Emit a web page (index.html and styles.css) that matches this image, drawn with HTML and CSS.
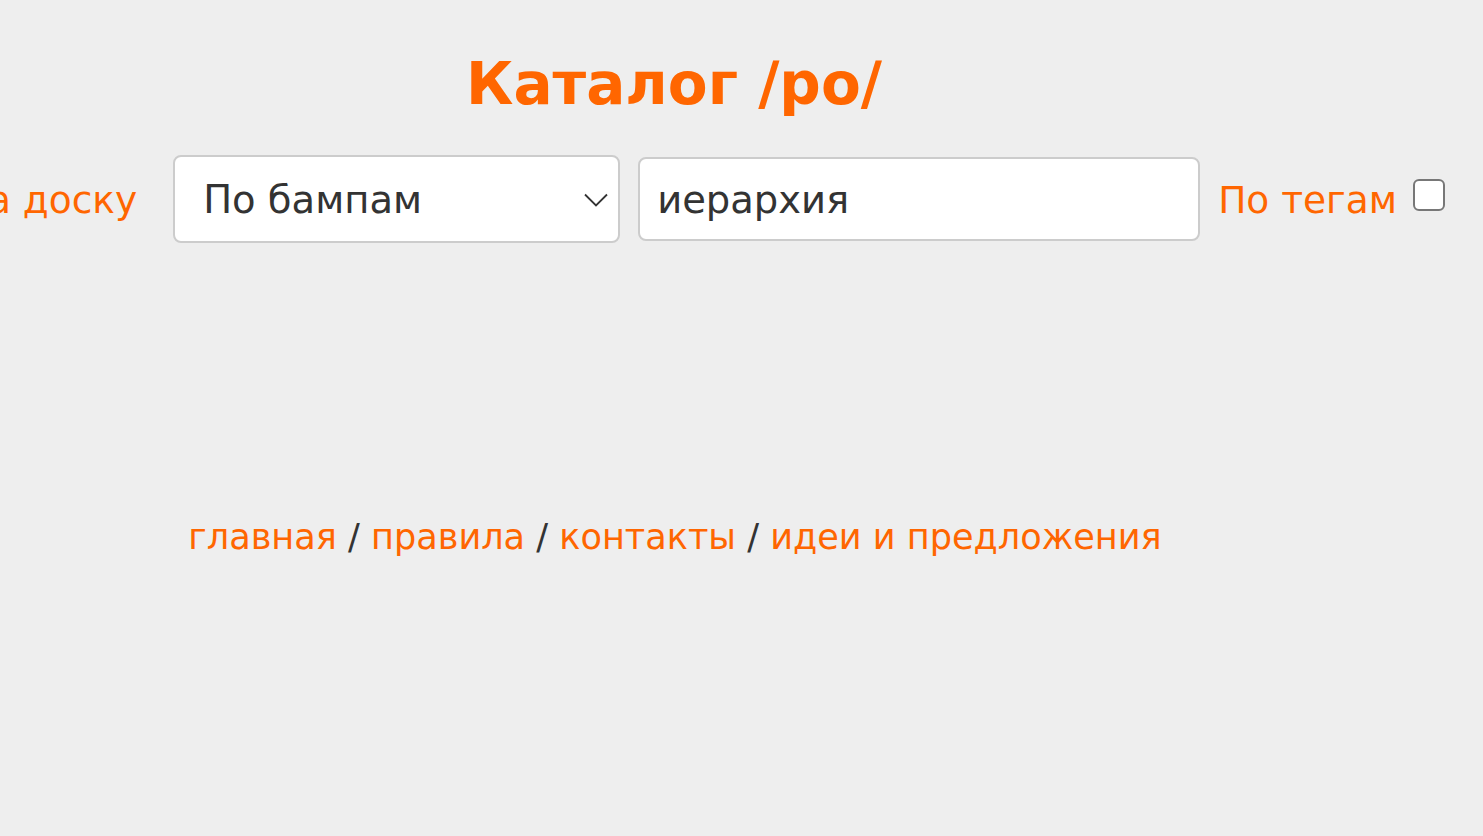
FILE: index.html
```html
<!DOCTYPE html>
<html lang="ru">
<head>
<meta charset="utf-8">
<title>Каталог /po/</title>
<link rel="stylesheet" href="styles.css">
</head>
<body>
<header class="header">
  <h1 class="title">Каталог /po/</h1>
</header>
<div class="controls">
  <a class="back" href="#">Назад на доску</a>
  <div class="select-wrap">
    <select class="sort">
      <option>По бампам</option>
      <option>По дате</option>
    </select>
    <svg class="chevron" width="24" height="14" viewBox="0 0 24 14"><path d="M1 1.5 L12 12.5 L23 1.5" fill="none" stroke="#333" stroke-width="1.8"/></svg>
  </div>
  <input class="search" type="text" value="иерархия">
  <label class="tags">По тегам <input class="tags-box" type="checkbox"></label>
</div>
<footer class="footer">
  <a href="#">главная</a> / <a href="#">правила</a> / <a href="#">контакты</a> / <a href="#">идеи и предложения</a>
</footer>
</body>
</html>
```
FILE: styles.css
```css
body {
  margin: 0;
  background: #eeeeee;
  font-family: "DejaVu Sans", Verdana, sans-serif;
  color: #333333;
  overflow: hidden;
}
a {
  color: #ff6600;
  text-decoration: none;
}
.header {
  width: 1348px;
  text-align: center;
}
.title {
  margin: 50px 0 0;
  font-size: 58px;
  font-weight: bold;
  line-height: normal;
  color: #ff6600;
}
.controls {
  width: 1448px;
  margin-top: 37px;
  display: flex;
  justify-content: flex-end;
  align-items: baseline;
  gap: 18px;
  font-size: 37.5px;
  white-space: nowrap;
}
.back {
  margin-right: 18px;
  flex-shrink: 0;
}
.select-wrap {
  position: relative;
  flex-shrink: 0;
}
.sort {
  appearance: none;
  -webkit-appearance: none;
  box-sizing: border-box;
  width: 447px;
  height: 88px;
  padding: 0 50px 0 28px;
  border: 2px solid #cccccc;
  border-radius: 8px;
  background: #ffffff;
  font-family: inherit;
  font-size: 38.5px;
  color: #333333;
  display: block;
}
.chevron {
  position: absolute;
  right: 12px;
  top: 38px;
  pointer-events: none;
}
.search {
  box-sizing: border-box;
  width: 562px;
  height: 84px;
  padding: 0 17px;
  border: 2px solid #cccccc;
  border-radius: 8px;
  background: #ffffff;
  font-family: inherit;
  font-size: 38.5px;
  color: #333333;
  flex-shrink: 0;
  outline: none;
}
.tags {
  color: #ff6600;
  flex-shrink: 0;
}
.tags-box {
  appearance: none;
  -webkit-appearance: none;
  box-sizing: border-box;
  width: 32px;
  height: 32px;
  margin: 0 3px 2px 4px;
  border: 2.5px solid #777777;
  border-radius: 6px;
  background: #ffffff;
  vertical-align: baseline;
}
.footer {
  width: 1350px;
  margin-top: 273px;
  text-align: center;
  font-size: 35.1px;
  line-height: normal;
  color: #333333;
}
```
